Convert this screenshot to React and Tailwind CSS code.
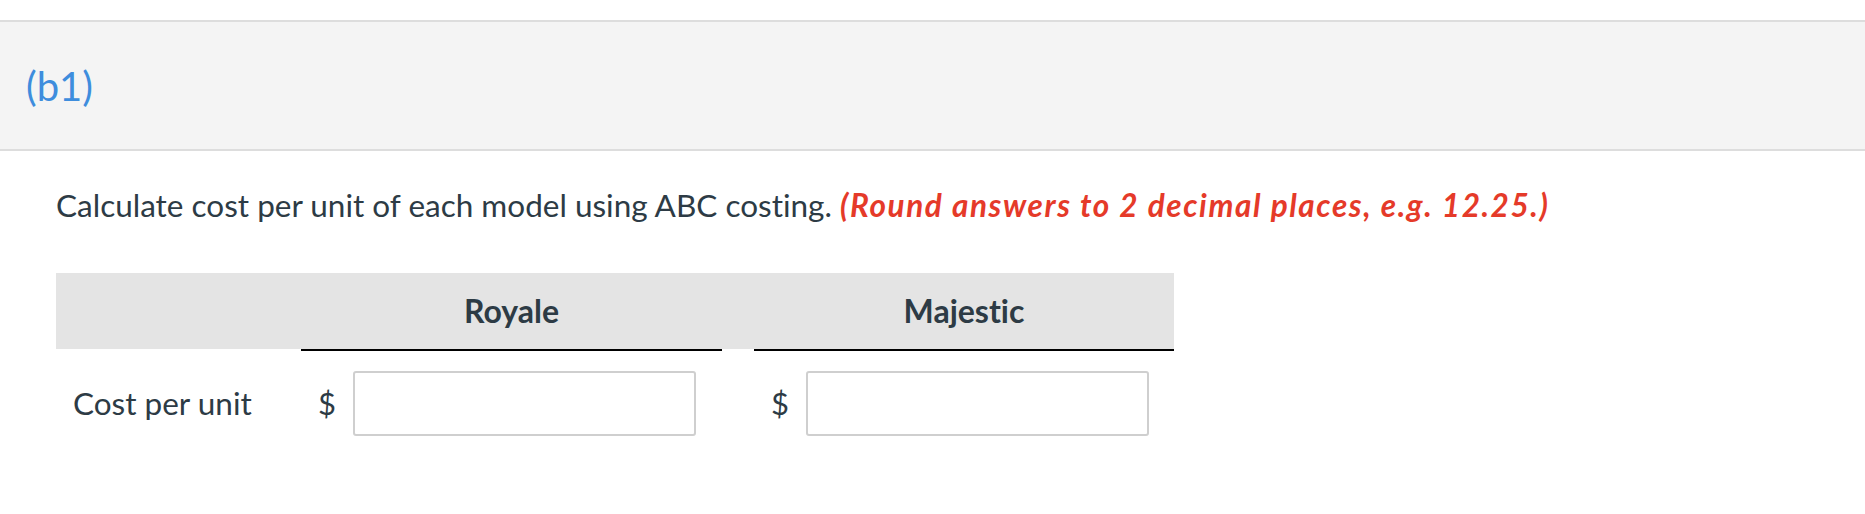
import React from "react"

const MoneyCell = ({ label }) => (
    <div className="flex items-center w-[421px] pl-[17px]">
        <span className="text-[31px] text-[#2d3b45] w-[35px]">$</span>
        <input
            type="text"
            aria-label={label}
            className="w-[343px] h-[65px] border-2 border-[#cfcfcf] rounded-[3px] bg-white outline-none"
        />
    </div>
)

const App = () => {
    return (
        <div className="min-h-screen bg-white pt-[20px] font-['Lato',sans-serif] text-[#2d3b45] [font-variant-ligatures:none]">
            {/* Part header */}
            <div className="h-[131px] border-y-2 border-[#dddddd] bg-[#f4f4f4] flex items-center pl-[26px]">
                <span className="text-[40px] text-[#3e8ddd] leading-none">(b1)</span>
            </div>

            {/* Question */}
            <p className="ml-[56px] mt-[34px] text-[31.5px] leading-[40px]">
                Calculate cost per unit of each model using ABC costing.{" "}
                <span className="text-[#e53a29] font-bold italic tracking-[1.6px]">(Round answers to 2 decimal places, e.g. 12.25.)</span>
            </p>

            {/* Answer table */}
            <div className="ml-[56px] mt-[48px]">
                <div className="flex">
                    <div className="w-[245px] h-[78px] bg-[#e4e4e4] border-b-2 border-white"></div>
                    <div className="w-[421px] h-[78px] bg-[#e4e4e4] border-b-2 border-black flex items-center justify-center text-[32px] font-bold">Royale</div>
                    <div className="w-[32px] h-[78px] bg-[#e4e4e4] border-b-2 border-white"></div>
                    <div className="w-[420px] h-[78px] bg-[#e4e4e4] border-b-2 border-black flex items-center justify-center text-[32px] font-bold">Majestic</div>
                </div>
                <div className="flex items-center pt-[20px]">
                    <div className="w-[245px] pl-[17px] text-[31.5px]">Cost per unit</div>
                    <MoneyCell label="Royale cost per unit" />
                    <div className="w-[32px]"></div>
                    <MoneyCell label="Majestic cost per unit" />
                </div>
            </div>
        </div>
    )
}

export default App
